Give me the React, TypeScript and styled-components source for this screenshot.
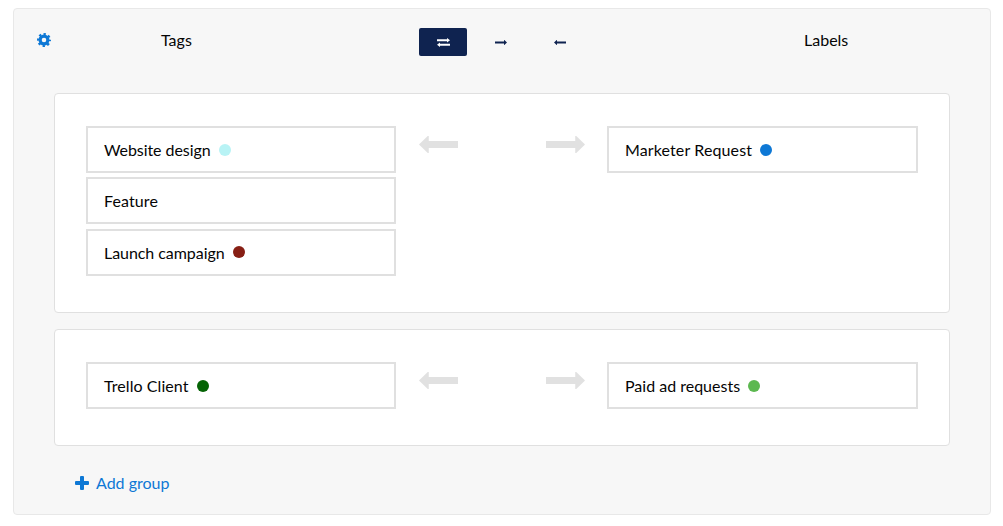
import styled, { createGlobalStyle } from 'styled-components';

const GlobalStyle = createGlobalStyle`
  html, body {
    margin: 0;
    padding: 0;
    background: #fff;
    font-family: Lato, "Open Sans", sans-serif;
    font-size: 16px;
    color: #050505;
  }
`;

const Panel = styled.div`
  box-sizing: border-box;
  width: 978px;
  height: 507px;
  margin: 8px 0 0 13px;
  padding: 0 40px;
  background: #f7f7f7;
  border: 1px solid #e8e8e8;
  border-radius: 4px;
`;

const Header = styled.div`
  display: grid;
  grid-template-columns: 383px 248px 1fr;
  align-items: center;
  height: 62px;
  margin: 0 -40px 22px;
  padding-left: 22px;
`;

const HeaderSide = styled.div`
  display: flex;
  align-items: center;
`;

const Gear = styled.svg`
  width: 14px;
  height: 14px;
  margin-left: 1px;
  color: #0e78d5;
  flex: none;
`;

const HeaderTitle = styled.span<{ $indent: number }>`
  margin-left: ${({ $indent }) => $indent}px;
  line-height: 17px;
  margin-bottom: 2px;
`;

const Modes = styled.div`
  display: flex;
  align-items: center;
  gap: 10.25px;
  margin-top: 4px;
`;

const ModeButton = styled.button<{ $active?: boolean }>`
  display: flex;
  align-items: center;
  justify-content: center;
  width: 48px;
  height: 28px;
  padding: 0;
  border: 0;
  border-radius: 2px;
  background: ${({ $active }) => ($active ? '#0f2350' : 'transparent')};
  color: ${({ $active }) => ($active ? '#fff' : '#0f2350')};
`;

const Group = styled.section<{ $height: number }>`
  box-sizing: border-box;
  display: grid;
  grid-template-columns: 310px 1fr 311px;
  height: ${({ $height }) => $height}px;
  padding: 32px 31px;
  margin-bottom: 16px;
  background: #fff;
  border: 1px solid #e0e0e0;
  border-radius: 4px;
`;

const Column = styled.div`
  display: flex;
  flex-direction: column;
  gap: 4.4px;
`;

const Item = styled.div<{ $tracking: number }>`
  box-sizing: border-box;
  display: flex;
  align-items: center;
  gap: 8px;
  height: 47px;
  padding: 0 16px;
  background: #fff;
  border: 2px solid #e0e0e0;
  letter-spacing: ${({ $tracking }) => $tracking}px;
`;

const Dot = styled.span<{ $color: string }>`
  width: 12px;
  height: 12px;
  border-radius: 50%;
  background: ${({ $color }) => $color};
`;

const Arrows = styled.div`
  display: flex;
  justify-content: space-between;
  align-items: center;
  height: 36px;
  padding: 0 22px 0 22.5px;
  color: #e1e1e1;
`;

const AddGroup = styled.a`
  display: flex;
  align-items: center;
  gap: 7px;
  margin: 27px 0 0 21px;
  color: #0e78d5;
`;

const LongArrow = ({ dir, width, height }: { dir: 'left' | 'right'; width: number; height: number }) => (
  <svg width={width} height={height} viewBox="0 0 40 17" fill="currentColor" preserveAspectRatio="none">
    <path
      d="M0 8.5 9 0h1v5h30v7H10v5H9z"
      transform={dir === 'right' ? 'matrix(-1 0 0 1 40 0)' : undefined}
    />
  </svg>
);

const SwapIcon = () => (
  <svg width="13" height="9" viewBox="0 0 13 9" fill="currentColor">
    <path d="M0 1.2h10V0l3 2.25-3 2.25V3.2H0zM13 5.8H3V4.5L0 6.75 3 9V7.8h10z" />
  </svg>
);

const PlusIcon = () => (
  <svg width="14" height="14" viewBox="0 0 14 14" fill="currentColor">
    <path d="M5 1a1 1 0 0 1 1-1h2a1 1 0 0 1 1 1v4h4a1 1 0 0 1 1 1v2a1 1 0 0 1-1 1H9v4a1 1 0 0 1-1 1H6a1 1 0 0 1-1-1V9H1a1 1 0 0 1-1-1V6a1 1 0 0 1 1-1h4z" />
  </svg>
);

type GroupRow = { label: string; color?: string; tracking?: number };

const groups: { height: number; left: GroupRow[]; right: GroupRow[] }[] = [
  {
    height: 220,
    left: [
      { label: 'Website design', color: '#b8f3f5', tracking: -0.07 },
      { label: 'Feature', tracking: 0.1 },
      { label: 'Launch campaign', color: '#871f14', tracking: -0.06 },
    ],
    right: [{ label: 'Marketer Request', color: '#0e78d5', tracking: 0.12 }],
  },
  {
    height: 117,
    left: [{ label: 'Trello Client', color: '#056405', tracking: 0.07 }],
    right: [{ label: 'Paid ad requests', color: '#5cb850' }],
  },
];

const Rows = ({ rows }: { rows: GroupRow[] }) => (
  <Column>
    {rows.map((row) => (
      <Item key={row.label} $tracking={row.tracking ?? 0}>
        {row.label}
        {row.color && <Dot $color={row.color} />}
      </Item>
    ))}
  </Column>
);

export default function App() {
  return (
    <>
      <GlobalStyle />
      <Panel>
        <Header>
          <HeaderSide>
            <Gear viewBox="0 0 14 14" fill="none" stroke="currentColor">
              <circle cx="7" cy="7" r="3.9" strokeWidth="3.2" />
              <circle cx="7" cy="7" r="6" strokeWidth="2" strokeDasharray="2.356 2.356" strokeDashoffset="1.178" />
            </Gear>
            <HeaderTitle $indent={110}>Tags</HeaderTitle>
          </HeaderSide>
          <Modes>
            <ModeButton $active>
              <SwapIcon />
            </ModeButton>
            <ModeButton>
              <LongArrow dir="right" width={12} height={5} />
            </ModeButton>
            <ModeButton>
              <LongArrow dir="left" width={12} height={5} />
            </ModeButton>
          </Modes>
          <HeaderSide>
            <HeaderTitle $indent={137}>Labels</HeaderTitle>
          </HeaderSide>
        </Header>
        {groups.map((group) => (
          <Group key={group.height} $height={group.height}>
            <Rows rows={group.left} />
            <Arrows>
              <LongArrow dir="left" width={39} height={17} />
              <LongArrow dir="right" width={39} height={17} />
            </Arrows>
            <Rows rows={group.right} />
          </Group>
        ))}
        <AddGroup>
          <PlusIcon />
          Add group
        </AddGroup>
      </Panel>
    </>
  );
}
